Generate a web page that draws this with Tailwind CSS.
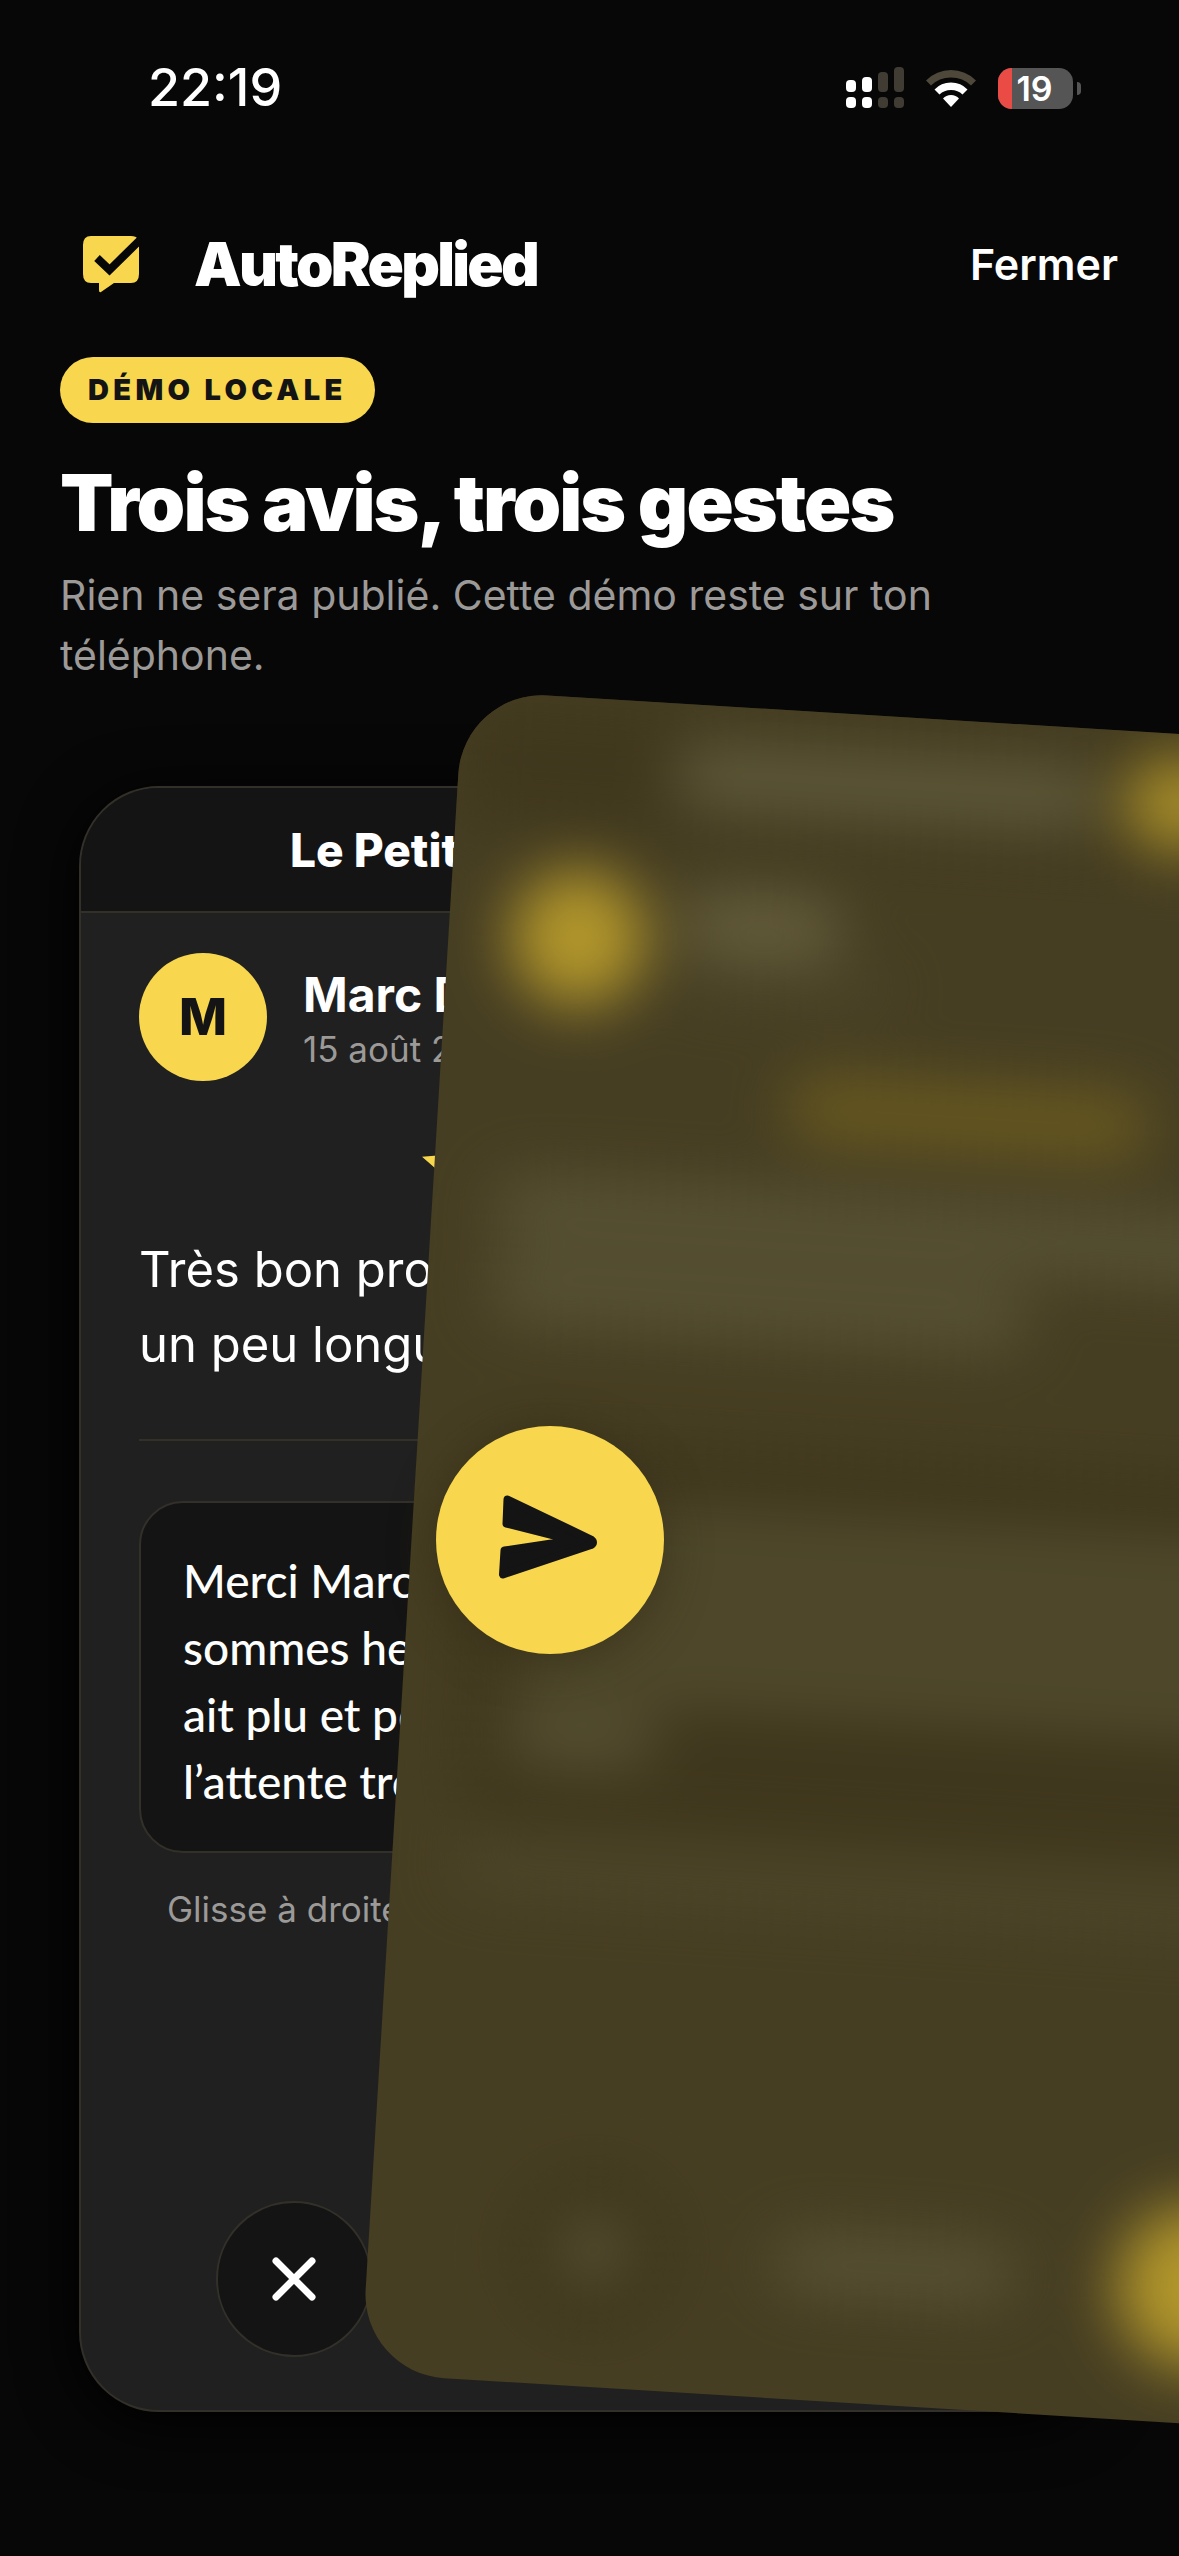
<!DOCTYPE html>
<html lang="fr">
<head>
<meta charset="utf-8">
<meta name="viewport" content="width=device-width, initial-scale=1">
<title>AutoReplied</title>
<script src="https://cdn.jsdelivr.net/npm/@tailwindcss/browser@4"></script>
</head>
<body class="bg-[#070707] text-white font-['Inter',sans-serif]">
<div class="flex min-h-screen flex-col overflow-hidden">

  <!-- Status bar -->
  <div class="flex h-[176px] items-center justify-between pl-[148px] pr-[98px]">
    <span class="text-[52px] leading-[60px] font-medium">22:19</span>
    <div class="flex items-center gap-[22px]">
      <svg class="h-[42px] w-[58px]" viewBox="0 0 58 42" fill="#fff" aria-hidden="true">
        <rect x="0" y="13" width="10" height="12" rx="4"/><rect x="0" y="30" width="10" height="11" rx="4"/>
        <rect x="16" y="10" width="10" height="15" rx="4"/><rect x="16" y="30" width="10" height="11" rx="4"/>
        <g fill="#403c34"><rect x="32" y="5" width="10" height="20" rx="4"/><rect x="32" y="30" width="10" height="11" rx="4"/>
        <rect x="48" y="0" width="10" height="25" rx="4"/><rect x="48" y="30" width="10" height="11" rx="4"/></g>
      </svg>
      <svg class="h-[38px] w-[50px]" viewBox="0 0 50 38" aria-hidden="true">
        <path d="M0 11.500Q10.500 1 25 1T50 11.500L45 16.500Q37 8.500 25 8.500T5 16.500Z" fill="#4d483a"/>
        <path d="M8.500 20.500Q15 13.500 25 13.500T41.500 20.500L36.500 25.500Q32 21 25 21T13.500 25.500Z" fill="#fff"/>
        <path d="M17 29.500Q20 26 25 26T33 29.500L25 38Z" fill="#fff"/>
      </svg>
      <div class="flex items-center gap-1">
        <div class="flex h-[41px] w-[75px] items-center rounded-[14px] bg-[#555555]">
          <span class="h-full w-[14px] rounded-l-[14px] bg-[#ea4b45]"></span>
          <span class="flex-1 pr-[16px] text-center text-[34px] leading-[41px] font-semibold">19</span>
        </div>
        <span class="h-[13px] w-[4px] rounded-r-full bg-[#555555]"></span>
      </div>
    </div>
  </div>

  <!-- App header -->
  <header class="flex h-[176px] items-center justify-between pl-[80px] pr-[61px]">
    <div class="flex items-center gap-[52px]">
      <svg class="h-[60px] w-[62px]" viewBox="0 0 62 60" aria-hidden="true">
        <path d="M11 2H51Q56 2 58 5L59 9V40Q59 49 51 49H34L21 58Q19 59 19 56V49H11Q3 49 3 40V11Q3 2 11 2Z" fill="#f8d74e"/>
        <path d="M17 24 29.500 36 62 4" fill="none" stroke="#070707" stroke-width="8"/>
      </svg>
      <span class="text-[60px] leading-[72px] font-black tracking-[-0.045em]">AutoReplied</span>
    </div>
    <button type="button" class="text-[43px] leading-[50px] font-semibold">Fermer</button>
  </header>

  <!-- Intro -->
  <section class="flex flex-col items-start px-[60px] pt-[5px]">
    <span class="flex h-[66px] items-center rounded-full bg-[#f8d74e] px-[28px] text-[29px] font-black tracking-[0.15em] text-[#141414]">DÉMO LOCALE</span>
    <h1 class="mt-[32px] text-[78px] leading-[96px] font-black tracking-tight whitespace-nowrap">Trois avis, trois gestes</h1>
    <p class="mt-[14px] max-w-[960px] text-[41px] leading-[60px] text-[#9c9a98]">Rien ne sera publié. Cette démo reste sur ton téléphone.</p>
  </section>

  <!-- Card deck -->
  <main class="relative mx-[60px] mt-[71px] mb-[114px] flex flex-1 flex-col px-[19px] py-[30px]">

    <!-- Next card -->
    <article class="flex flex-1 flex-col overflow-hidden rounded-[80px] border-2 border-[#33302a] bg-[#202020] shadow-[0_10px_60px_#000]">
      <div class="flex h-[125px] items-center border-b-2 border-[#33302a] bg-[#141414] pl-[209px]">
        <h2 class="text-[46px] leading-[54px] font-extrabold whitespace-nowrap">Le Petit</h2>
      </div>
      <div class="flex flex-1 flex-col px-[58px] pt-[40px] pb-[53px]">
        <div class="flex items-center gap-[36px]">
          <span class="flex size-[128px] items-center justify-center rounded-full bg-[#f8d74e] text-[51px] font-extrabold text-[#141414]">M</span>
          <div class="pt-[6px]">
            <h3 class="text-[48px] leading-[58px] font-bold">Marc D.</h3>
            <p class="text-[35px] leading-[50px] text-[#9c9a98]">15 août 2025</p>
          </div>
        </div>
        <div class="mt-[54px] flex justify-center gap-[9px]" role="img" aria-label="Cinq étoiles">
          <svg class="h-[57px] w-[60px]" viewBox="2 2 20 19" fill="#f8d74e"><path d="M12 17.270 18.180 21l-1.640-7.030L22 9.240l-7.190-.61L12 2 9.190 8.630 2 9.240l5.460 4.730L5.820 21z"/></svg>
          <svg class="h-[57px] w-[60px]" viewBox="2 2 20 19" fill="#f8d74e"><path d="M12 17.270 18.180 21l-1.640-7.030L22 9.240l-7.190-.61L12 2 9.190 8.630 2 9.240l5.460 4.730L5.820 21z"/></svg>
          <svg class="h-[57px] w-[60px]" viewBox="2 2 20 19" fill="#f8d74e"><path d="M12 17.270 18.180 21l-1.640-7.030L22 9.240l-7.190-.61L12 2 9.190 8.630 2 9.240l5.460 4.730L5.820 21z"/></svg>
          <svg class="h-[57px] w-[60px]" viewBox="2 2 20 19" fill="#f8d74e"><path d="M12 17.270 18.180 21l-1.640-7.030L22 9.240l-7.190-.61L12 2 9.190 8.630 2 9.240l5.460 4.730L5.820 21z"/></svg>
          <svg class="h-[57px] w-[60px]" viewBox="2 2 20 19" fill="#f8d74e"><path d="M12 17.270 18.180 21l-1.640-7.030L22 9.240l-7.190-.61L12 2 9.190 8.630 2 9.240l5.460 4.730L5.820 21z"/></svg>
        </div>
        <p class="mt-[40px] text-[49px] leading-[75px] whitespace-nowrap">Très bon produit<br>un peu longue</p>
        <hr class="mt-[57px] border-t-2 border-[#33302a]">
        <p class="mt-[60px] rounded-[44px] border-2 border-[#33302a] bg-[#141414] px-[42px] pt-[44px] pb-[36px] font-['Chalkboard_SE','Lato',sans-serif] text-[46px] leading-[67px] font-medium whitespace-nowrap">Merci Marc<br>sommes heureux<br>ait plu et pour<br>l’attente trop</p>
        <p class="mt-[31px] pl-[28px] text-[35px] leading-[50px] text-[#9c9a98]">Glisse à droite</p>
        <div class="mt-auto flex justify-between px-[77px]">
          <button type="button" aria-label="Ignorer" class="flex size-[156px] items-center justify-center rounded-full border-2 border-[#33302a] bg-[#141414]">
            <svg class="size-[44px]" viewBox="0 0 44 44" fill="none" stroke="#fff" stroke-width="7" stroke-linecap="round"><path d="M4 4 40 40M40 4 4 40"/></svg>
          </button>
          <button type="button" aria-label="Publier" class="size-[156px] rounded-full bg-[#f8d74e]"></button>
        </div>
      </div>
    </article>

    <!-- Card being swiped away, blurred and tinted -->
    <div class="absolute inset-0 translate-x-[351px] -translate-y-[35px] rotate-[3.5deg] overflow-hidden rounded-[84px] bg-[#463e22]" aria-hidden="true">
      <div class="flex h-full flex-col blur-[30px]">
        <div class="flex h-[132px] items-center gap-[20px] bg-[#40381d] pt-[8px] pl-[215px]">
          <span class="h-[62px] w-[430px] rounded-full bg-[#615b3c]"></span>
          <span class="h-[92px] w-[120px] rounded-full bg-[#a88e2a]"></span>
        </div>
        <div class="flex flex-1 flex-col px-[62px] pt-[40px] pb-[55px]">
          <div class="flex items-center gap-[34px]">
            <span class="size-[136px] rounded-full bg-[#b2962b]"></span>
            <div class="flex flex-col gap-[16px]">
              <span class="h-[56px] w-[160px] rounded-full bg-[#68613f]"></span>
              <span class="h-[28px] w-[210px] rounded-full bg-[#4e472a]"></span>
            </div>
          </div>
          <div class="mt-[58px] h-[60px] w-[360px] self-center rounded-full bg-[#6b5b1f]"></div>
          <div class="mt-[56px] flex flex-col gap-[16px]">
            <span class="h-[64px] w-full rounded-full bg-[#585234]"></span>
            <span class="h-[64px] w-[540px] rounded-full bg-[#585234]"></span>
          </div>
          <div class="mt-[116px] flex flex-col gap-[24px] rounded-[44px] bg-[#3f371d] px-[44px] py-[70px]">
            <span class="h-[44px] w-full rounded-full bg-[#565031]"></span>
            <span class="h-[44px] w-full rounded-full bg-[#565031]"></span>
            <span class="h-[44px] w-[760px] rounded-full bg-[#565031]"></span>
            <span class="h-[44px] w-[150px] rounded-full bg-[#5c5637]"></span>
          </div>
          <div class="mt-[20px] h-[44px] rounded-full bg-[#4e472a]"></div>
          <div class="mt-auto flex items-center justify-between px-[84px]">
            <span class="flex size-[158px] items-center justify-center rounded-full bg-[#3f371d]"><span class="size-[56px] rounded-full bg-[#625c3b]"></span></span>
            <span class="h-[52px] w-[240px] rounded-full bg-[#5a5435]"></span>
            <span class="size-[164px] rounded-full bg-[#b2962b]"></span>
          </div>
        </div>
      </div>
    </div>

    <!-- Swipe-right action badge -->
    <div class="absolute top-[670px] left-[376px] size-[228px] rounded-full bg-[#f8d74e] shadow-[0_8px_44px_rgba(50,43,20,0.6)]">
      <svg class="size-full" viewBox="0 0 228 228" fill="#141414" stroke="#141414" stroke-width="8" stroke-linejoin="round" role="img" aria-label="Publier"><path d="M71.500 73.500 155 113.500Q159 116.500 155 119L67 148.500 68.500 124.500 137 114.300 70.500 97.600Z"/></svg>
    </div>
  </main>
</div>
</body>
</html>
